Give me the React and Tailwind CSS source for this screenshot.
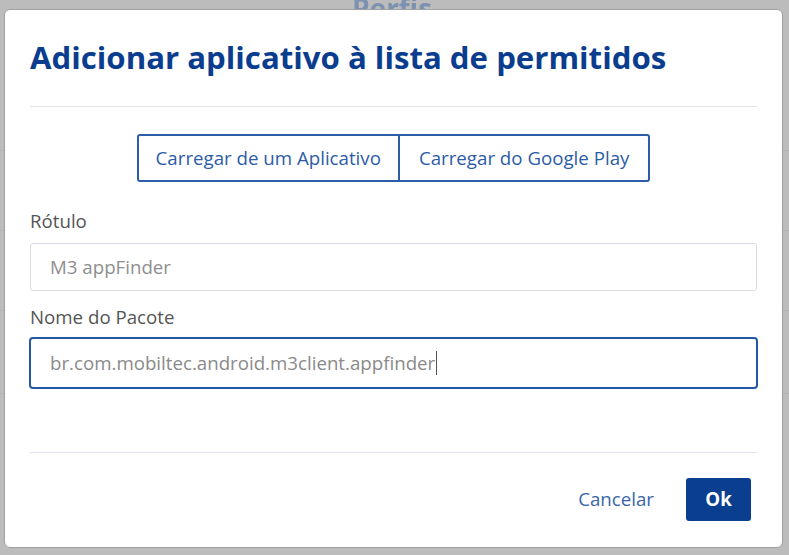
export default function App() {
  const font = { fontFamily: '"Open Sans", "Noto Sans", sans-serif' };
  return (
    <div className="relative w-[789px] h-[555px] overflow-hidden bg-[#bcbcbc]" style={font}>
      <div className="absolute left-[352px] top-[-6px] text-[28px] leading-[28px] font-bold text-[#7d91b1] blur-[0.5px]">
        Perfis
      </div>
      <div className="absolute left-0 right-0 top-[150px] h-px bg-[#b3b3b3]" />
      <div className="absolute left-0 right-0 top-[230px] h-px bg-[#b3b3b3]" />
      <div className="absolute left-0 right-0 top-[310px] h-px bg-[#b3b3b3]" />
      <div className="absolute left-0 right-0 top-[393px] h-px bg-[#b3b3b3]" />
      <div className="relative ml-[4px] mt-[9px] w-[779px] h-[539px] bg-white rounded-[6px] border border-[#a0a0a0] px-[25px] pt-[26px] flex flex-col">
        <h1 className="text-[31.2px] leading-[42px] font-bold text-[#0b3d8f] whitespace-nowrap">
          Adicionar aplicativo à lista de permitidos
        </h1>
        <div className="mt-[28px] h-px bg-[#dfe4ea]" />
        <div className="mt-[27px] flex justify-center">
          <div className="flex h-[48px] rounded-[3px] border-2 border-[#2d5ca8] text-[18.7px] text-[#2d5ca6]">
            <button className="px-[17px] h-full flex items-center whitespace-nowrap">Carregar de um Aplicativo</button>
            <div className="w-[2px] bg-[#2d5ca8]" />
            <button className="px-[19px] h-full flex items-center whitespace-nowrap">Carregar do Google Play</button>
          </div>
        </div>
        <label className="mt-[27px] text-[18.7px] leading-[24px] text-[#555]">Rótulo</label>
        <div className="mt-[10px] h-[48px] rounded-[3px] border border-[#d7dde3] flex items-center px-[19px] text-[18.7px] text-[#8e8e8e]">
          M3 appFinder
        </div>
        <label className="mt-[14px] text-[18.7px] leading-[24px] text-[#555]">Nome do Pacote</label>
        <div className="mt-[8px] -mx-px h-[52px] rounded-[4px] border-2 border-[#2557a7] flex items-center px-[19px] text-[18.7px] text-[#8a8a8a]">
          <span>br.com.mobiltec.android.m3client.appfinder</span>
          <span className="ml-[1px] w-px h-[24px] bg-[#555]" />
        </div>
        <div className="mt-[63px] h-px bg-[#dfe4ea]" />
        <div className="mt-[25px] flex justify-end items-center pr-[6px]">
          <button className="text-[18.7px] text-[#3a66a8] mr-[32px]">Cancelar</button>
          <button className="w-[65px] h-[43px] rounded-[3px] bg-[#0a3f8f] text-white text-[18.7px] font-bold">Ok</button>
        </div>
      </div>
    </div>
  );
}
